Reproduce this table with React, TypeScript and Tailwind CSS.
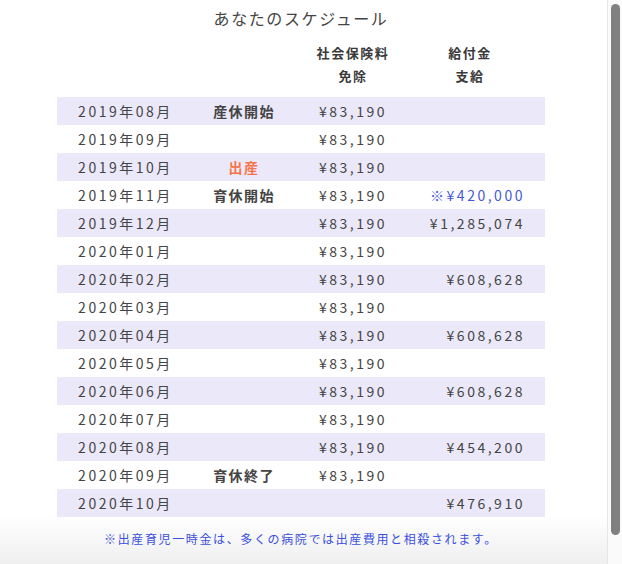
const rows: { month: string; event?: string; eventColor?: 'orange'; exempt?: string; benefit?: string; benefitBlue?: boolean }[] = [
  { month: '2019年08月', event: '産休開始', exempt: '¥83,190' },
  { month: '2019年09月', exempt: '¥83,190' },
  { month: '2019年10月', event: '出産', eventColor: 'orange', exempt: '¥83,190' },
  { month: '2019年11月', event: '育休開始', exempt: '¥83,190', benefit: '※¥420,000', benefitBlue: true },
  { month: '2019年12月', exempt: '¥83,190', benefit: '¥1,285,074' },
  { month: '2020年01月', exempt: '¥83,190' },
  { month: '2020年02月', exempt: '¥83,190', benefit: '¥608,628' },
  { month: '2020年03月', exempt: '¥83,190' },
  { month: '2020年04月', exempt: '¥83,190', benefit: '¥608,628' },
  { month: '2020年05月', exempt: '¥83,190' },
  { month: '2020年06月', exempt: '¥83,190', benefit: '¥608,628' },
  { month: '2020年07月', exempt: '¥83,190' },
  { month: '2020年08月', exempt: '¥83,190', benefit: '¥454,200' },
  { month: '2020年09月', event: '育休終了', exempt: '¥83,190' },
  { month: '2020年10月', benefit: '¥476,910' },
]

const cols = 'grid grid-cols-[134px_106px_112px_136px]'

export default function App() {
  return (
    <div
      className="flex h-[564px] w-[622px] overflow-hidden bg-[linear-gradient(to_bottom,#ffffff_515px,#efefef)] text-[#444]"
      style={{ fontFamily: '"Noto Sans CJK JP", "Noto Sans", sans-serif' }}
    >
      <div className="flex-1">
        <div className="ml-[57px] w-[488px]">
          {/* Title */}
          <h1 className="pt-[6px] text-center text-[16px] leading-[24px] tracking-[0.1em] text-[#444]">
            あなたのスケジュール
          </h1>

          {/* Column headers */}
          <div className={`${cols} mt-[11px] text-[13px] font-bold leading-[23px] tracking-[0.12em] text-[#3a3a3a]`}>
            <div />
            <div />
            <div className="text-center">
              社会保険料
              <br />
              免除
            </div>
            <div className="pr-[14px] text-center">
              給付金
              <br />
              支給
            </div>
          </div>

          {/* Rows */}
          <div className="mt-[10px]">
            {rows.map((r, i) => (
              <div
                key={r.month}
                className={`${cols} h-[28px] items-center text-[14px] tracking-[0.18em] ${i % 2 === 0 ? 'bg-[#ebe9f9]' : ''}`}
              >
                <div className="pl-[3px] text-center">{r.month}</div>
                <div
                  className={`text-center font-bold tracking-[0.1em] ${r.eventColor === 'orange' ? 'text-[#f7744a]' : 'text-[#444]'}`}
                >
                  {r.event}
                </div>
                <div className="text-center">{r.exempt}</div>
                <div className={`pr-[20px] text-right ${r.benefitBlue ? 'text-[#4557dd]' : ''}`}>{r.benefit}</div>
              </div>
            ))}
          </div>

          {/* Footnote */}
          <p className="mt-[13px] text-center text-[12px] tracking-[0.135em] text-[#3a4fe0]">
            ※出産育児一時金は、多くの病院では出産費用と相殺されます。
          </p>
        </div>
      </div>

      {/* Scrollbar */}
      <div className="w-[15px] border-l border-[#e6e6e6] bg-[#fafafa] pl-[3px] pt-[4px]">
        <div className="h-[531px] w-[9px] rounded-full bg-[#808080]" />
      </div>
    </div>
  )
}
